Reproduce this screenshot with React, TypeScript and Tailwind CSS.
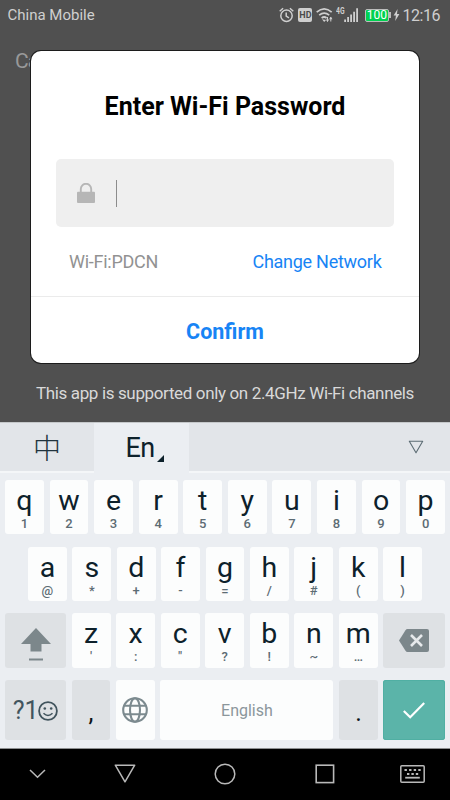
import clsx from "clsx";
import type { ReactNode } from "react";

type KeyDef = { main: string; sub: string };

const ROW_1: KeyDef[] = [
  { main: "q", sub: "1" },
  { main: "w", sub: "2" },
  { main: "e", sub: "3" },
  { main: "r", sub: "4" },
  { main: "t", sub: "5" },
  { main: "y", sub: "6" },
  { main: "u", sub: "7" },
  { main: "i", sub: "8" },
  { main: "o", sub: "9" },
  { main: "p", sub: "0" },
];

const ROW_2: KeyDef[] = [
  { main: "a", sub: "@" },
  { main: "s", sub: "*" },
  { main: "d", sub: "+" },
  { main: "f", sub: "-" },
  { main: "g", sub: "=" },
  { main: "h", sub: "/" },
  { main: "j", sub: "#" },
  { main: "k", sub: "(" },
  { main: "l", sub: ")" },
];

const ROW_3: KeyDef[] = [
  { main: "z", sub: "'" },
  { main: "x", sub: ":" },
  { main: "c", sub: '"' },
  { main: "v", sub: "?" },
  { main: "b", sub: "!" },
  { main: "n", sub: "~" },
  { main: "m", sub: "…" },
];

function LetterKey({ main, sub }: KeyDef) {
  return (
    <button className="flex h-full w-[38.8px] shrink-0 flex-col items-center rounded-[3px] bg-[#fcfdfd] pt-[4px]">
      <span className="text-[28.5px] leading-[34px] text-[#0d212b]">{main}</span>
      <span className="text-[13px] leading-[11px] font-medium text-[#5c6c74]">
        {sub}
      </span>
    </button>
  );
}

function FnKey({
  className,
  children,
}: {
  className?: string;
  children: ReactNode;
}) {
  return (
    <button
      className={clsx(
        "flex h-full shrink-0 items-center justify-center rounded-[3px]",
        className
      )}
    >
      {children}
    </button>
  );
}

function StatusBar() {
  return (
    <header className="flex h-[30px] items-center justify-between pr-[10px] pl-[7.5px] text-[#cfcfcf]">
      <span className="pt-px text-[15px] leading-[29px]">China Mobile</span>
      <div className="flex items-center">
        <svg width="15" height="16" viewBox="0 0 15 16" fill="none" stroke="currentColor" strokeWidth="1.5">
          <circle cx="7.5" cy="8.8" r="5.7" />
          <path d="M7.2 5.4v3.7l2.8 1.7M.7 4.3 4.1 1.2M14.3 4.3 10.9 1.2" />
        </svg>
        <span className="ml-[4px] flex h-[14px] w-[14px] items-center justify-center rounded-[2px] bg-[#cfcfcf] pt-px text-[9px] leading-[13px] font-bold text-[#4b4b4b]">
          HD
        </span>
        <svg className="ml-[3.5px]" width="17" height="16" viewBox="0 0 17 16" fill="none" stroke="currentColor" strokeWidth="1.7">
          <path d="M.7 5.2Q8.2-1.4 15.7 5.2M3.2 8.2q5-4.2 10 0M5.6 11q2.6-2 5 0" />
          <path d="m6 12.3 2.2 2.6 1.8-2z" fill="currentColor" stroke="none" />
          <path d="M11.5 10v4.5M14.8 10v4.5" strokeWidth="1" />
          <path d="M9.8 12.5h3.4l-1.7 2.5zM13.1 12.2l1.7-2.4 1.7 2.4z" fill="currentColor" stroke="none" />
        </svg>
        <svg className="ml-[3px]" width="23" height="16" viewBox="0 0 23 16" fill="currentColor">
          <text x="0" y="7.2" fontSize="8.5" fontWeight="700" textLength="8.5" lengthAdjust="spacingAndGlyphs">
            4G
          </text>
          <path d="M8.2 12.6h1.8V15H8.2zM11.2 10h1.8v5h-1.8zM14.2 7.4H16V15h-1.8zM17.2 4.7H19V15h-1.8zM20.2 1.2H22V15h-1.8z" />
        </svg>
        <span className="ml-[6px] flex h-[13px] w-[24px] items-center justify-center rounded-[2px] border border-[#bcbcbc] bg-[#00d150] text-[12px] leading-[11px] text-white">
          100
        </span>
        <span className="h-[6px] w-[2px] bg-[#bcbcbc]" />
        <svg className="ml-[2px]" width="7" height="12" viewBox="0 0 7 12" fill="currentColor">
          <path d="M4.6 0 .6 6.5h2.3L2.2 12l4.2-7H4z" />
        </svg>
        <span className="ml-[2.5px] pt-px text-[16px] leading-[29px] tracking-[-0.45px]">12:16</span>
      </div>
    </header>
  );
}

function WifiDialog() {
  return (
    <section className="absolute top-[51px] left-[31px] flex h-[312px] w-[388px] flex-col rounded-[10px] bg-white shadow-[0_0_0_1px_#1c1c1c]">
      <h1 className="mt-[40px] text-center text-[25px] leading-[32px] font-bold text-black">
        Enter Wi-Fi Password
      </h1>
      <div className="mx-[25px] mt-[36px] flex h-[68px] items-center rounded-[5px] bg-[#efefef] pl-[21px]">
        <svg width="18" height="20" viewBox="0 0 18 20">
          <path d="M3.8 9V6a5.2 5.2 0 0 1 10.4 0v3" fill="none" stroke="#b6b6b6" strokeWidth="1.9" />
          <rect y="8.7" width="18" height="11.3" rx="1" fill="#b6b6b6" />
        </svg>
        <span className="ml-[21px] h-[27px] w-px bg-[#8c8c8c]" />
      </div>
      <div className="mt-[22px] flex items-center justify-between pr-[37.5px] pl-[38px] text-[18px] leading-[26px] tracking-[-0.27px]">
        <span className="text-[#929292]">Wi-Fi:PDCN</span>
        <button className="text-[#1784f5]">Change Network</button>
      </div>
      <button className="mt-[21px] flex-1 border-t border-[#ebebeb] pt-[5px] text-[21.5px] font-bold text-[#1784f5]">
        Confirm
      </button>
    </section>
  );
}

function Keyboard() {
  return (
    <section className="h-[326px] bg-[#ebeef2]">
      <div className="flex h-[51px] border-t border-[#c5c8ca] text-[#20333d]">
        <button className="flex w-[94px] items-center justify-center border-b-2 border-[#f4f6f8] bg-[#e2e5e9] font-['Noto_Sans_CJK_SC'] text-[28px] font-light">
          中
        </button>
        <button className="flex w-[95px] items-center justify-center pl-[7px] text-[27px] tracking-[-0.7px] text-[#0d212b]">
          <span>En</span>
          <svg className="mt-[20px] ml-[3px]" width="7" height="7" viewBox="0 0 7 7">
            <path d="M7 0v7H0z" fill="#0d212b" />
          </svg>
        </button>
        <div className="flex flex-1 items-center justify-end border-b-2 border-[#f4f6f8] bg-[#e2e5e9] pr-[26px]">
          <svg width="16" height="14" viewBox="0 0 16 14" fill="none" stroke="#5c6c74" strokeWidth="1.1" strokeLinejoin="round">
            <path d="M1.3 1.3h13.4L8 12.8z" />
          </svg>
        </div>
      </div>

      <div className="mt-[7px] flex h-[54px] justify-between px-[5px]">
        {ROW_1.map((k) => (
          <LetterKey key={k.main} {...k} />
        ))}
      </div>
      <div className="mt-[13px] flex h-[54px] justify-between pr-[28px] pl-[28px]">
        {ROW_2.map((k) => (
          <LetterKey key={k.main} {...k} />
        ))}
      </div>
      <div className="mt-[12px] flex h-[55px] justify-between px-[5px]">
        <FnKey className="w-[61px] bg-[#dee1e4]">
          <svg className="mt-[8px]" width="30" height="33" viewBox="0 0 30 33" fill="#7c878b">
            <path d="M15 0 30 16h-9.5v7.5h-11V16H0zM8 30.5h14v2H8z" />
          </svg>
        </FnKey>
        {ROW_3.map((k) => (
          <LetterKey key={k.main} {...k} />
        ))}
        <FnKey className="w-[61.5px] bg-[#dee1e4]">
          <svg width="30" height="23" viewBox="0 0 30 23">
            <path d="M8.5 0H28a2 2 0 0 1 2 2v19a2 2 0 0 1-2 2H8.5Q7.3 23 6.5 21.8L0 11.5 6.5 1.2Q7.3 0 8.5 0z" fill="#7c878b" />
            <path d="m12 6 11 11M23 6 12 17" stroke="#e6e9eb" strokeWidth="2.6" />
          </svg>
        </FnKey>
      </div>
      <div className="mt-[12px] flex h-[60px] justify-between px-[5px]">
        <FnKey className="w-[61px] bg-[#dee1e4] pt-px text-[25px] text-[#41545d]">
          <span className="tracking-[-0.3px]">?1</span>
          <svg width="20" height="20" viewBox="0 0 20 20" fill="none" stroke="currentColor" strokeWidth="1.8">
            <circle cx="10" cy="10" r="8.9" />
            <path d="M5.5 12.3q4.5 4.4 9 0" strokeWidth="1.5" />
            <circle cx="6.8" cy="7.5" r="1.3" fill="currentColor" stroke="none" />
            <circle cx="13.2" cy="7.5" r="1.3" fill="currentColor" stroke="none" />
          </svg>
        </FnKey>
        <FnKey className="w-[38.8px] bg-[#dee1e4] pt-[5px] text-[25px] text-[#0d1418]">,</FnKey>
        <FnKey className="w-[38.8px] bg-[#fcfdfd]">
          <svg width="26" height="26" viewBox="0 0 26 26" fill="none" stroke="#7c8a8f" strokeWidth="2.1">
            <circle cx="13" cy="13" r="11.8" />
            <ellipse cx="13" cy="13" rx="5" ry="11.8" />
            <path d="M2.3 8.7h21.4M2.3 17.3h21.4" />
          </svg>
        </FnKey>
        <FnKey className="w-[173px] bg-[#fcfdfd] pt-[2px] text-[16px] text-[#8b969b]">English</FnKey>
        <FnKey className="w-[38.8px] bg-[#dee1e4] pt-[5px] text-[25px] text-[#0d1418]">.</FnKey>
        <FnKey className="w-[61.5px] bg-[#5bb4a9] shadow-[inset_0_0_0_1px_#50afa3]">
          <svg width="22" height="17" viewBox="0 0 22 17" fill="none" stroke="#fff" strokeWidth="2.2">
            <path d="m.8 9 6.4 6.3L21.2 1" />
          </svg>
        </FnKey>
      </div>
    </section>
  );
}

function NavBar() {
  return (
    <nav className="flex h-[52px] items-center justify-between border-t border-[#8d8f90] bg-black pr-[25px] pb-[2px] pl-[29px] text-[#b9b9b9]">
      <svg width="17" height="10" viewBox="0 0 17 10" fill="none" stroke="currentColor" strokeWidth="1.5">
        <path d="m1 1 7.5 7.3L16 1" />
      </svg>
      <svg className="ml-[3px]" width="22" height="19" viewBox="0 0 22 19" fill="none" stroke="currentColor" strokeWidth="1.5" strokeLinejoin="round">
        <path d="M1.3 1.2h19.4L11 17.8z" />
      </svg>
      <svg className="ml-[12px]" width="22" height="22" viewBox="0 0 22 22" fill="none" stroke="currentColor" strokeWidth="1.5">
        <circle cx="11" cy="11" r="9.8" />
      </svg>
      <svg className="ml-[14px]" width="20" height="20" viewBox="0 0 20 20" fill="none" stroke="currentColor" strokeWidth="1.6">
        <rect x="1.2" y="1.2" width="17.4" height="17.4" />
      </svg>
      <svg width="25" height="18" viewBox="0 0 25 18" fill="none" stroke="currentColor" strokeWidth="1.5">
        <rect x=".8" y=".8" width="23.4" height="16.4" rx="1" />
        <path d="M4.5 5h16.5" strokeWidth="1.8" strokeDasharray="2.4 2.2" />
        <path d="M7 9h11.5" strokeWidth="1.8" strokeDasharray="2.4 2" />
        <path d="M5.2 12.7h14.6" strokeWidth="1.8" />
      </svg>
    </nav>
  );
}

export default function App() {
  return (
    <main className="flex h-[800px] w-[450px] flex-col overflow-hidden bg-[#505050] font-[Roboto,'Noto_Sans_CJK_SC',sans-serif]">
      <div className="relative h-[422px] shrink-0">
        <StatusBar />
        <p className="pt-[15px] pl-[15px] text-[21px] leading-[32px] tracking-[-1px] text-[#999]">
          Cancel
        </p>
        <WifiDialog />
        <p className="mt-[303px] text-center text-[17px] leading-[26px] tracking-[-0.36px] text-[#d9d9d9]">
          This app is supported only on 2.4GHz Wi-Fi channels
        </p>
      </div>
      <Keyboard />
      <NavBar />
    </main>
  );
}
